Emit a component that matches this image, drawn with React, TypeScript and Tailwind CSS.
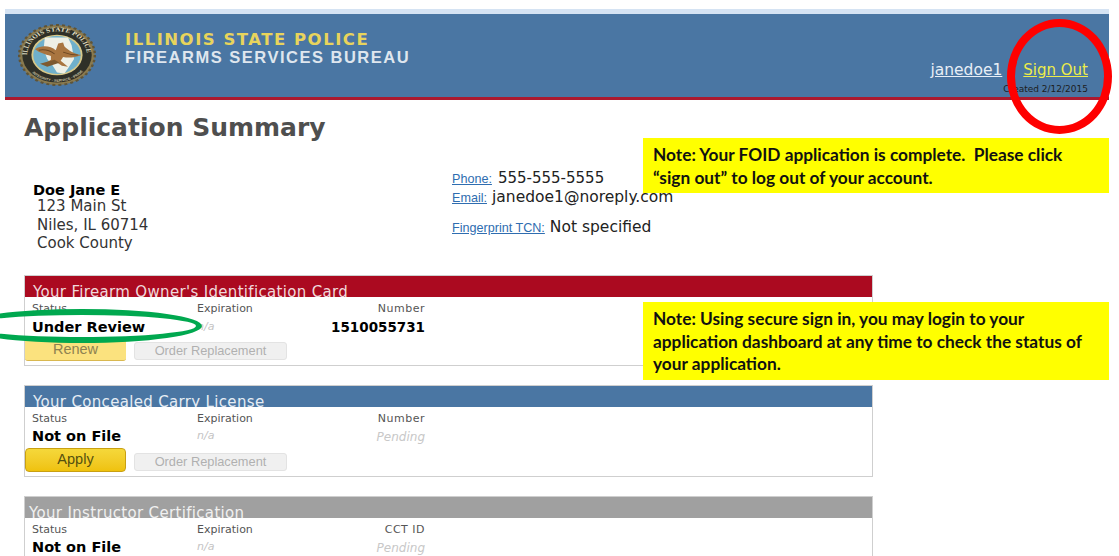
const verdana = "font-['DejaVu_Sans',sans-serif]";

function Seal() {
  return (
    <svg width="78" height="62" viewBox="0 0 64 64" preserveAspectRatio="none" className="shrink-0">
      <circle cx="32" cy="32" r="31" fill="#8a7a4e" />
      <circle cx="32" cy="32" r="31" fill="none" stroke="#5f5437" strokeWidth="2" strokeDasharray="2.5 2.5" />
      <circle cx="32" cy="32" r="28.5" fill="#2f3028" />
      <defs>
        <path id="seal-top" d="M7.5 32 A24.5 24.5 0 0 1 56.5 32" />
        <path id="seal-bottom" d="M4.5 32 A27.5 27.5 0 0 0 59.5 32" />
      </defs>
      <text fontSize="6" fontWeight="700" fill="#e8e2c8" fontFamily="Liberation Serif, serif" textLength="74">
        <textPath href="#seal-top">ILLINOIS STATE POLICE</textPath>
      </text>
      <text fontSize="3.4" fontWeight="700" fill="#c9c2a4" fontFamily="Liberation Sans, sans-serif" textLength="48">
        <textPath href="#seal-bottom" startOffset="20">INTEGRITY · SERVICE · PRIDE</textPath>
      </text>
      <circle cx="32" cy="32" r="21" fill="#d8c888" />
      <circle cx="32" cy="32" r="19.5" fill="#6fb0cb" />
      <path d="M22 14 L41 14 L44 22 L46 36 L41 46 L38 51 L32 50 L28 42 L24 36 L21 26 Z" fill="#eef0e6" />
      <path d="M14 26 C20 21 27 23 31 27 L33 20 L37 19 L38 23 C41 27 46 31 52 32 C46 35 41 35 37 34 L35 38 L41 44 L36 43 L31 39 L25 42 L20 42 L27 37 L27 33 C22 31 18 30 14 26 Z" fill="#a9753f" />
      <path d="M17 27 C22 26 27 28 30 31 M37 29 C41 31 45 32 49 32" fill="none" stroke="#6d4822" strokeWidth="1" />
      <path d="M18 41 L30 37 L34 40 L24 44 Z" fill="#7d5a30" />
    </svg>
  );
}

function Card({
  title,
  titleClass,
  bar,
  thirdLabel,
  status,
  number,
  numberBold,
  action,
  actionFaded,
}: {
  title: string;
  titleClass: string;
  bar: string;
  thirdLabel: string;
  status: string;
  number: string;
  numberBold?: boolean;
  action?: string;
  actionFaded?: boolean;
}) {
  return (
    <section className="w-[849px] border border-[#cfcfcf] bg-white">
      <div className={`h-[21px] overflow-hidden ${bar}`}>
        <p className={`pt-[8px] text-[15px] leading-[16px] tracking-[0.33px] ${titleClass}`}>{title}</p>
      </div>
      <div className="h-[41px] text-[#555]">
        <div className="flex pl-[7px] pt-[5px]">
          <span className="w-[165px] text-[11px] leading-[14px]">Status</span>
          <span className="text-[11px] leading-[14px]">Expiration</span>
          <span className="ml-auto mr-[447px] text-[11px] leading-[14px] tracking-[0.5px]">{thirdLabel}</span>
        </div>
        <div className="mt-px flex items-center pl-[7px]">
          <span className="w-[165px] text-[14.5px] font-bold leading-[19px] text-black">{status}</span>
          <span className="text-[11px] italic text-[#c4c4c4]">n/a</span>
          <span
            className={
              numberBold
                ? "ml-auto mr-[447px] text-[13.5px] font-bold text-black"
                : "ml-auto mr-[447px] text-[12px] italic text-[#c8c8c8]"
            }
          >
            {number}
          </span>
        </div>
      </div>
      {action && (
        <div className="flex items-end gap-[8px] pb-[4px]">
          <button
            className={
              actionFaded
                ? "h-[23px] w-[101px] rounded-[3px] border-b border-[#d9b850] bg-[#fbe27e] font-['Liberation_Sans',sans-serif] text-[14.5px] leading-[12px] text-[#8d8150]"
                : "h-[24px] w-[101px] rounded-[4px] border border-[#c9a012] bg-gradient-to-b from-[#f5d83a] to-[#efc20c] pb-[2px] font-['Liberation_Sans',sans-serif] text-[14.5px] leading-[14px] text-[#54500f]"
            }
          >
            {action}
          </button>
          <button className="mb-px h-[18px] w-[153px] rounded-[3px] border border-[#e3e3e3] bg-[#f0f0f0] font-['Liberation_Sans',sans-serif] text-[12.8px] leading-[14px] text-[#b0b0b0]">
            Order Replacement
          </button>
        </div>
      )}
    </section>
  );
}

export default function App() {
  return (
    <div className={`relative h-[556px] w-[1119px] overflow-hidden bg-white ${verdana}`}>
      <div className="pl-[5px] pr-[10px] pt-[9px]">
        <div className="h-[5px] bg-[#d5e3f3]" />
        <header className="flex h-[83px] bg-[#4a76a3] pl-[13px] pt-[10px]">
          <Seal />
          <div className="ml-[29px] pt-[7px]">
            <p className="whitespace-nowrap text-[16.5px] font-bold leading-[17px] tracking-[1.5px] text-[#e8d45c]">ILLINOIS STATE POLICE</p>
            <p className="whitespace-nowrap font-['Liberation_Sans',sans-serif] text-[16.5px] font-bold leading-[19px] tracking-[1.5px] text-[#dfe6ee]">FIREARMS SERVICES BUREAU</p>
          </div>
          <div className="ml-auto mr-[21px] flex flex-col items-end pt-[37px]">
            <div className="flex items-baseline gap-[21px] text-[15.5px] leading-[18px]">
              <a className="text-[#e7eef6] underline">janedoe1</a>
              <a className="text-[15px] text-[#eded4a] underline">Sign Out</a>
            </div>
            <p className="mt-[5px] text-[9px] leading-[10px] text-[#1d1d1d]">Created 2/12/2015</p>
          </div>
        </header>
        <div className="h-[3px] bg-[#ab1a2f]" />
      </div>

      <main className="pl-[24px]">
        <h1 className="mt-[14px] text-[25px] font-bold leading-[28px] text-[#4f4f4f]">Application Summary</h1>

        <div className="mt-[13px] flex h-[108px]">
          <div className="w-[428px] pl-[9px] pt-[28px] text-[15px] leading-[18.5px] text-[#333]">
            <p className="text-[14.5px] font-bold leading-[14px] text-black">Doe Jane E</p>
            <p className="pl-[4px]">123 Main St</p>
            <p className="pl-[4px]">Niles, IL 60714</p>
            <p className="pl-[4px]">Cook County</p>
          </div>
          <div className="pt-[14px] text-[15.5px] text-[#222]">
            <p className="leading-[18px]">
              <a className="mr-[6px] font-['Liberation_Sans',sans-serif] text-[12.6px] text-[#2f6db0] underline">Phone:</a>
              <span className="text-[15px]">555-555-5555</span>
            </p>
            <p className="leading-[19px]">
              <a className="mr-[5px] font-['Liberation_Sans',sans-serif] text-[12.6px] text-[#2f6db0] underline">Email:</a>
              janedoe1@noreply.com
            </p>
            <p className="mt-[10px] leading-[18px]">
              <a className="mr-[5px] font-['Liberation_Sans',sans-serif] text-[12.6px] text-[#2f6db0] underline">Fingerprint TCN:</a>
              Not specified
            </p>
          </div>
        </div>

        <div className="mt-[12px] flex flex-col gap-[19px]">
          <Card
            title="Your Firearm Owner's Identification Card"
            bar="bg-[#ab0a20] pl-[8px]"
            titleClass="text-[#f0d9dc]"
            thirdLabel="Number"
            status="Under Review"
            number="1510055731"
            numberBold
            action="Renew"
            actionFaded
          />
          <Card
            title="Your Concealed Carry License"
            bar="bg-[#4a76a3] pl-[8px]"
            titleClass="text-[#e6edf4]"
            thirdLabel="Number"
            status="Not on File"
            number="Pending"
            action="Apply"
          />
          <Card
            title="Your Instructor Certification"
            bar="bg-[#a0a0a0] pl-[4px]"
            titleClass="text-[#f0f0f0]"
            thirdLabel="CCT ID"
            status="Not on File"
            number="Pending"
          />
        </div>
      </main>

      {/* callouts pasted over the screenshot */}
      <div className="absolute left-[643px] top-[138px] h-[55px] w-[466px] bg-[#ffff00] pl-[10px] pt-[5px] font-['Lato',sans-serif] text-[17.3px] font-bold leading-[23px] text-[#111]">
        <p>Note: Your FOID application is complete.&nbsp; Please click</p>
        <p>“sign out” to log out of your account.</p>
      </div>
      <div className="absolute left-[643px] top-[302px] h-[78px] w-[466px] bg-[#ffff00] pl-[10px] pt-[6px] font-['Lato',sans-serif] text-[17.3px] font-bold leading-[22.5px] text-[#111]">
        <p>Note: Using secure sign in, you may login to your</p>
        <p>application dashboard at any time to check the status of</p>
        <p>your application.</p>
      </div>
      <div className="absolute left-[1007px] top-[19px] h-[115px] w-[105px] rounded-[50%] border-[8px] border-[#fe0000]" />
      <div className="absolute left-[-38px] top-[309px] h-[34px] w-[240px] rounded-[50%] border-[6px] border-[#00a84f]" />
    </div>
  );
}
